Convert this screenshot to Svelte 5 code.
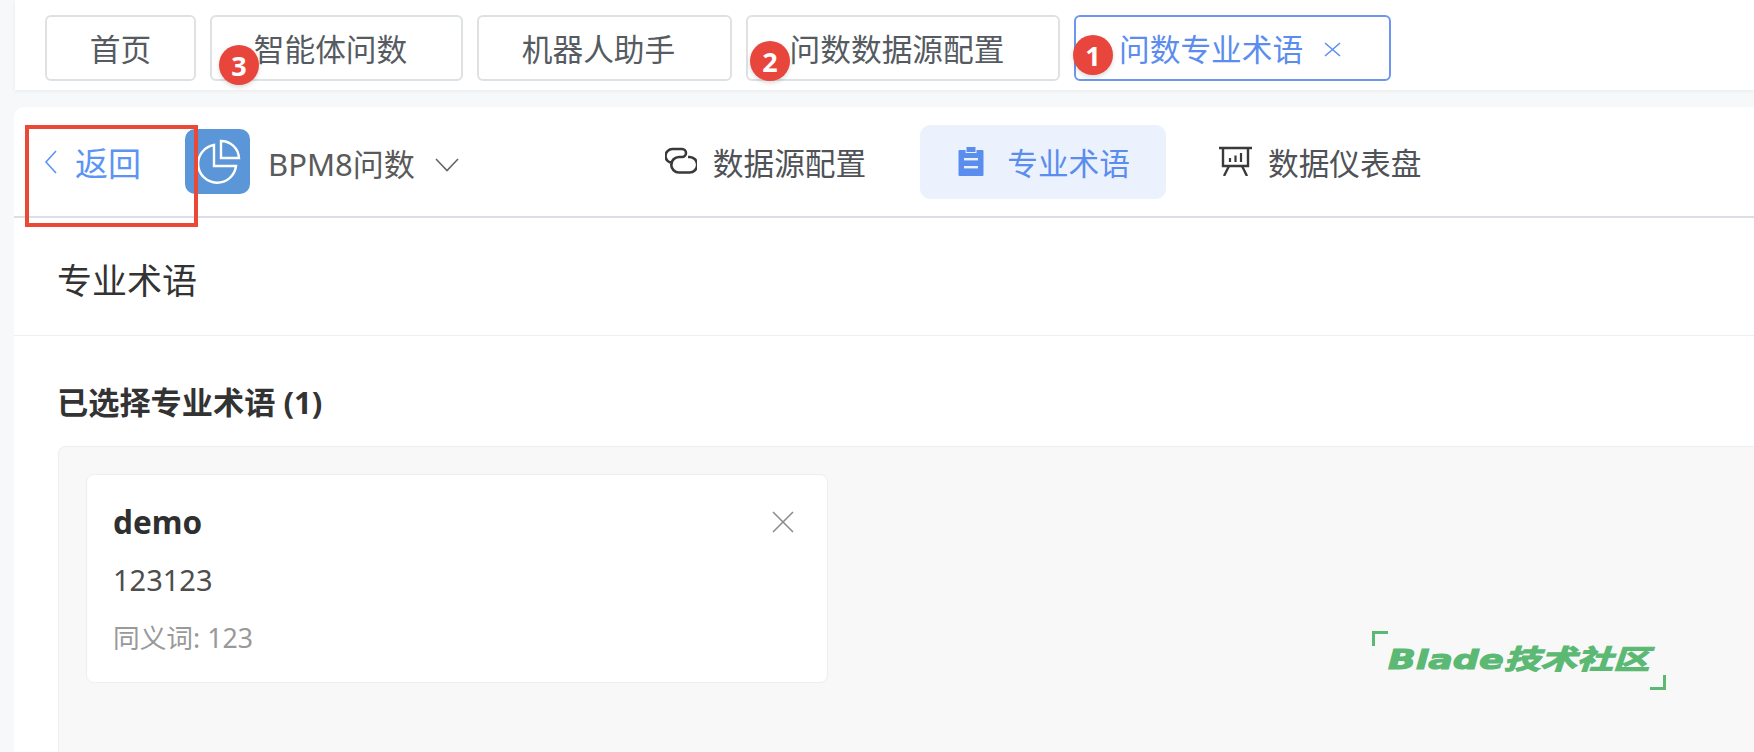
<script lang="ts">
  const tabs = [
    { label: '首页', width: 151 },
    { label: '智能体问数', width: 253, badge: 3, left: 7, top: 28 },
    { label: '机器人助手', width: 255 },
    { label: '问数数据源配置', width: 314, badge: 2, left: 2, top: 24 }
  ];
</script>

<div class="page">
  <div class="tabbar">
    {#each tabs as tab}
      <div class="tab" style="width: {tab.width}px">
        {tab.label}
        {#if tab.badge}
          <span class="badge" style="left: {tab.left}px; top: {tab.top}px">{tab.badge}</span>
        {/if}
      </div>
    {/each}
    <div class="tab active">
      问数专业术语
      <svg class="tab-close" viewBox="0 0 17 15" fill="none" stroke="currentColor" stroke-width="1.5">
        <line x1="1" y1="1" x2="16" y2="14"></line>
        <line x1="16" y1="1" x2="1" y2="14"></line>
      </svg>
      <span class="badge badge-active">1</span>
    </div>
  </div>

  <main class="main">
    <header class="header">
      <div class="back">
        <svg class="back-icon" viewBox="0 0 13 24" fill="none" stroke="currentColor" stroke-width="1.6">
          <polyline points="12,1 2,12 12,23"></polyline>
        </svg>
        返回
      </div>
      <div class="logo">
        <svg viewBox="0 0 65 65" width="65" height="65" fill="none" stroke="#fff" stroke-width="2.4">
          <path d="M29 16 A19 19 0 1 0 51 37 H29 Z"></path>
          <path d="M36 12 A18 18 0 0 1 54 29 H36 Z"></path>
        </svg>
      </div>
      <div class="app-name">BPM8问数</div>
      <svg class="caret" viewBox="0 0 24 14" fill="none" stroke="currentColor" stroke-width="1.6">
        <polyline points="1,1 12,12.5 23,1"></polyline>
      </svg>

      <nav class="nav">
        <div class="nav-item">
          <svg width="32" height="28" viewBox="0 0 32 28" fill="none" stroke="#3a3a3a" stroke-width="2.6">
            <path d="M8 16 H7.5 A7 7 0 0 1 7.5 2 H17 A4 4 0 0 1 17 10 H14 A7.75 7.75 0 0 0 14 25.5 H24.5 A7.75 7.75 0 0 0 24.5 10 H23"></path>
          </svg>
          数据源配置
        </div>
        <div class="nav-item current">
          <svg width="26" height="30" viewBox="0 0 26 30">
            <rect x="0.5" y="4" width="25" height="26" rx="1" fill="#5b8def"></rect>
            <rect x="8" y="0.5" width="10" height="6" fill="#5b8def" stroke="#ebf2fd" stroke-width="1"></rect>
            <rect x="6" y="12" width="14" height="2.4" fill="#ebf2fd"></rect>
            <rect x="6" y="20" width="14" height="2.4" fill="#ebf2fd"></rect>
          </svg>
          专业术语
        </div>
        <div class="nav-item">
          <svg width="33" height="30" viewBox="0 0 33 30" fill="none" stroke="#3a3a3a" stroke-width="2.4">
            <line x1="0" y1="2" x2="33" y2="2"></line>
            <path d="M4 2 V20 H29 V2"></path>
            <line x1="10" y1="20" x2="5" y2="30"></line>
            <line x1="23" y1="20" x2="28" y2="30"></line>
            <line x1="11" y1="16" x2="11" y2="12" stroke-width="2.2"></line>
            <line x1="16.5" y1="16" x2="16.5" y2="9.5" stroke-width="2.2"></line>
            <line x1="22" y1="16" x2="22" y2="7" stroke-width="2.2"></line>
          </svg>
          数据仪表盘
        </div>
      </nav>
    </header>

    <div class="title-bar">专业术语</div>

    <section class="content">
      <h2 class="subtitle">已选择专业术语 (1)</h2>
      <div class="panel">
        <div class="card">
          <div class="card-head">
            <span class="card-name">demo</span>
            <svg class="card-close" viewBox="0 0 22 22" fill="none" stroke="#8c8c8c" stroke-width="1.6">
              <line x1="1" y1="1" x2="21" y2="21"></line>
              <line x1="21" y1="1" x2="1" y2="21"></line>
            </svg>
          </div>
          <div class="card-desc">123123</div>
          <div class="card-syn">同义词: 123</div>
        </div>
      </div>
    </section>
  </main>

  <div class="red-box"></div>

  <div class="mark">
    <span class="corner tl"></span>
    <span class="mark-text">Blade技术社区</span>
    <span class="corner br"></span>
  </div>
</div>

<style>
  :global(body) {
    margin: 0;
    overflow: hidden;
    background: #f7f8fa;
  }

  .page {
    position: relative;
    height: 752px;
    display: flex;
    flex-direction: column;
    font-family: "Noto Sans", "Noto Sans CJK SC", sans-serif;
    color: #555b61;
    overflow: hidden;
  }

  .tabbar {
    margin-left: 15px;
    height: 90px;
    box-sizing: border-box;
    padding: 15px 0 0 30px;
    display: flex;
    align-items: flex-start;
    gap: 14px;
    background: #fff;
    box-shadow: 0 1px 4px rgba(0, 0, 0, 0.06);
  }

  .tab {
    position: relative;
    height: 66px;
    box-sizing: border-box;
    border: 2px solid #dde1e2;
    border-radius: 6px;
    display: flex;
    align-items: center;
    justify-content: center;
    font-size: 30.7px;
    line-height: 1;
    padding-top: 2px;
  }

  .tab + .tab {
    padding-right: 12px;
  }

  .tab.active {
    width: 317px;
    justify-content: flex-start;
    padding-left: 43px;
    padding-right: 0;
    border-color: #6c96ef;
    color: #5b8def;
  }

  .tab-close {
    width: 17px;
    height: 15px;
    margin-left: 21px;
  }

  .badge {
    position: absolute;
    width: 40px;
    height: 40px;
    border-radius: 50%;
    background: #e8453c;
    color: #fff;
    font-size: 27px;
    font-weight: 700;
    display: flex;
    align-items: center;
    justify-content: center;
    box-shadow: 0 2px 4px rgba(0, 0, 0, 0.15);
  }

  .badge-active {
    left: -3px;
    top: 18px;
  }

  .main {
    flex: 1;
    margin: 17px 0 0 14px;
    min-height: 0;
    display: flex;
    flex-direction: column;
    background: #fff;
    border-top-left-radius: 10px;
  }

  .header {
    height: 111px;
    box-sizing: border-box;
    padding: 18px 0 0 30px;
    display: flex;
    align-items: flex-start;
    border-bottom: 2px solid #dce0e6;
  }

  .back {
    height: 74px;
    display: flex;
    align-items: center;
    gap: 18px;
    font-size: 33px;
    color: #5c94f5;
    width: 141px;
  }

  .back-icon {
    width: 13px;
    height: 24px;
  }

  .logo {
    width: 65px;
    height: 65px;
    margin-top: 4px;
    border-radius: 10px;
    background: #5b96d8;
  }

  .logo svg {
    display: block;
  }

  .app-name {
    height: 74px;
    margin-left: 18px;
    display: flex;
    align-items: center;
    font-size: 31px;
    color: #5a5a5a;
  }

  .caret {
    width: 24px;
    height: 14px;
    margin: 33px 0 0 20px;
    color: #666;
  }

  .nav {
    margin-left: 170px;
    display: flex;
    gap: 17px;
  }

  .nav-item {
    height: 74px;
    box-sizing: border-box;
    padding: 0 37px 2px 36px;
    display: flex;
    align-items: center;
    gap: 16px;
    border-radius: 10px;
    font-size: 30.7px;
    color: #4f5256;
  }

  .nav-item.current {
    padding: 0 36px 2px 38px;
    background: #ebf2fd;
    color: #5b8def;
    gap: 23px;
  }

  .title-bar {
    height: 118px;
    box-sizing: border-box;
    padding: 4px 0 0 43px;
    display: flex;
    align-items: center;
    border-bottom: 1px solid #eef0f5;
    font-size: 35px;
    color: #333;
  }

  .content {
    flex: 1;
    min-height: 0;
    display: flex;
    flex-direction: column;
    padding-left: 44px;
  }

  .subtitle {
    margin: 0 0 0 -1px;
    height: 110px;
    box-sizing: border-box;
    padding-top: 18px;
    display: flex;
    align-items: center;
    font-size: 31.2px;
    font-weight: 700;
    color: #333;
  }

  .panel {
    flex: 1;
    padding: 27px 0 0 27px;
    background: #f8f8f9;
    border: 1px solid #eceef3;
    border-right: 0;
    border-bottom: 0;
    border-top-left-radius: 8px;
  }

  .card {
    width: 742px;
    height: 209px;
    box-sizing: border-box;
    padding: 19px 33px 0 26px;
    background: #fff;
    border: 1px solid #eceef3;
    border-radius: 8px;
  }

  .card-head {
    height: 54px;
    display: flex;
    align-items: center;
    justify-content: space-between;
  }

  .card-name {
    font-size: 31.5px;
    font-weight: 700;
    color: #2f2f2f;
  }

  .card-close {
    width: 22px;
    height: 22px;
    margin-top: 1px;
  }

  .card-desc {
    margin-top: 9px;
    height: 44px;
    display: flex;
    align-items: center;
    font-size: 29px;
    color: #4d4d4d;
  }

  .card-syn {
    margin-top: 13px;
    height: 44px;
    display: flex;
    align-items: center;
    font-size: 26.7px;
    color: #999;
  }

  .red-box {
    position: absolute;
    left: 25px;
    top: 125px;
    width: 173px;
    height: 102px;
    box-sizing: border-box;
    border: 4px solid #ea4a35;
    pointer-events: none;
  }

  .mark {
    position: absolute;
    left: 1372px;
    top: 631px;
    width: 294px;
    height: 59px;
    color: #5bb974;
  }

  .mark-text {
    position: absolute;
    left: 16px;
    top: 13px;
    white-space: nowrap;
    font-family: "DejaVu Sans", "Noto Sans CJK SC", sans-serif;
    font-size: 27px;
    line-height: 32px;
    font-weight: 700;
    font-style: italic;
    transform: scaleX(1.35);
    transform-origin: left center;
    -webkit-text-stroke: 1.1px #5bb974;
  }

  .corner {
    position: absolute;
    width: 16px;
    height: 15px;
    box-sizing: border-box;
    border: 0 solid #5bb974;
  }

  .corner.tl {
    left: 0;
    top: 0;
    border-width: 3px 0 0 3px;
  }

  .corner.br {
    right: 0;
    bottom: 0;
    border-width: 0 3px 3px 0;
  }
</style>
